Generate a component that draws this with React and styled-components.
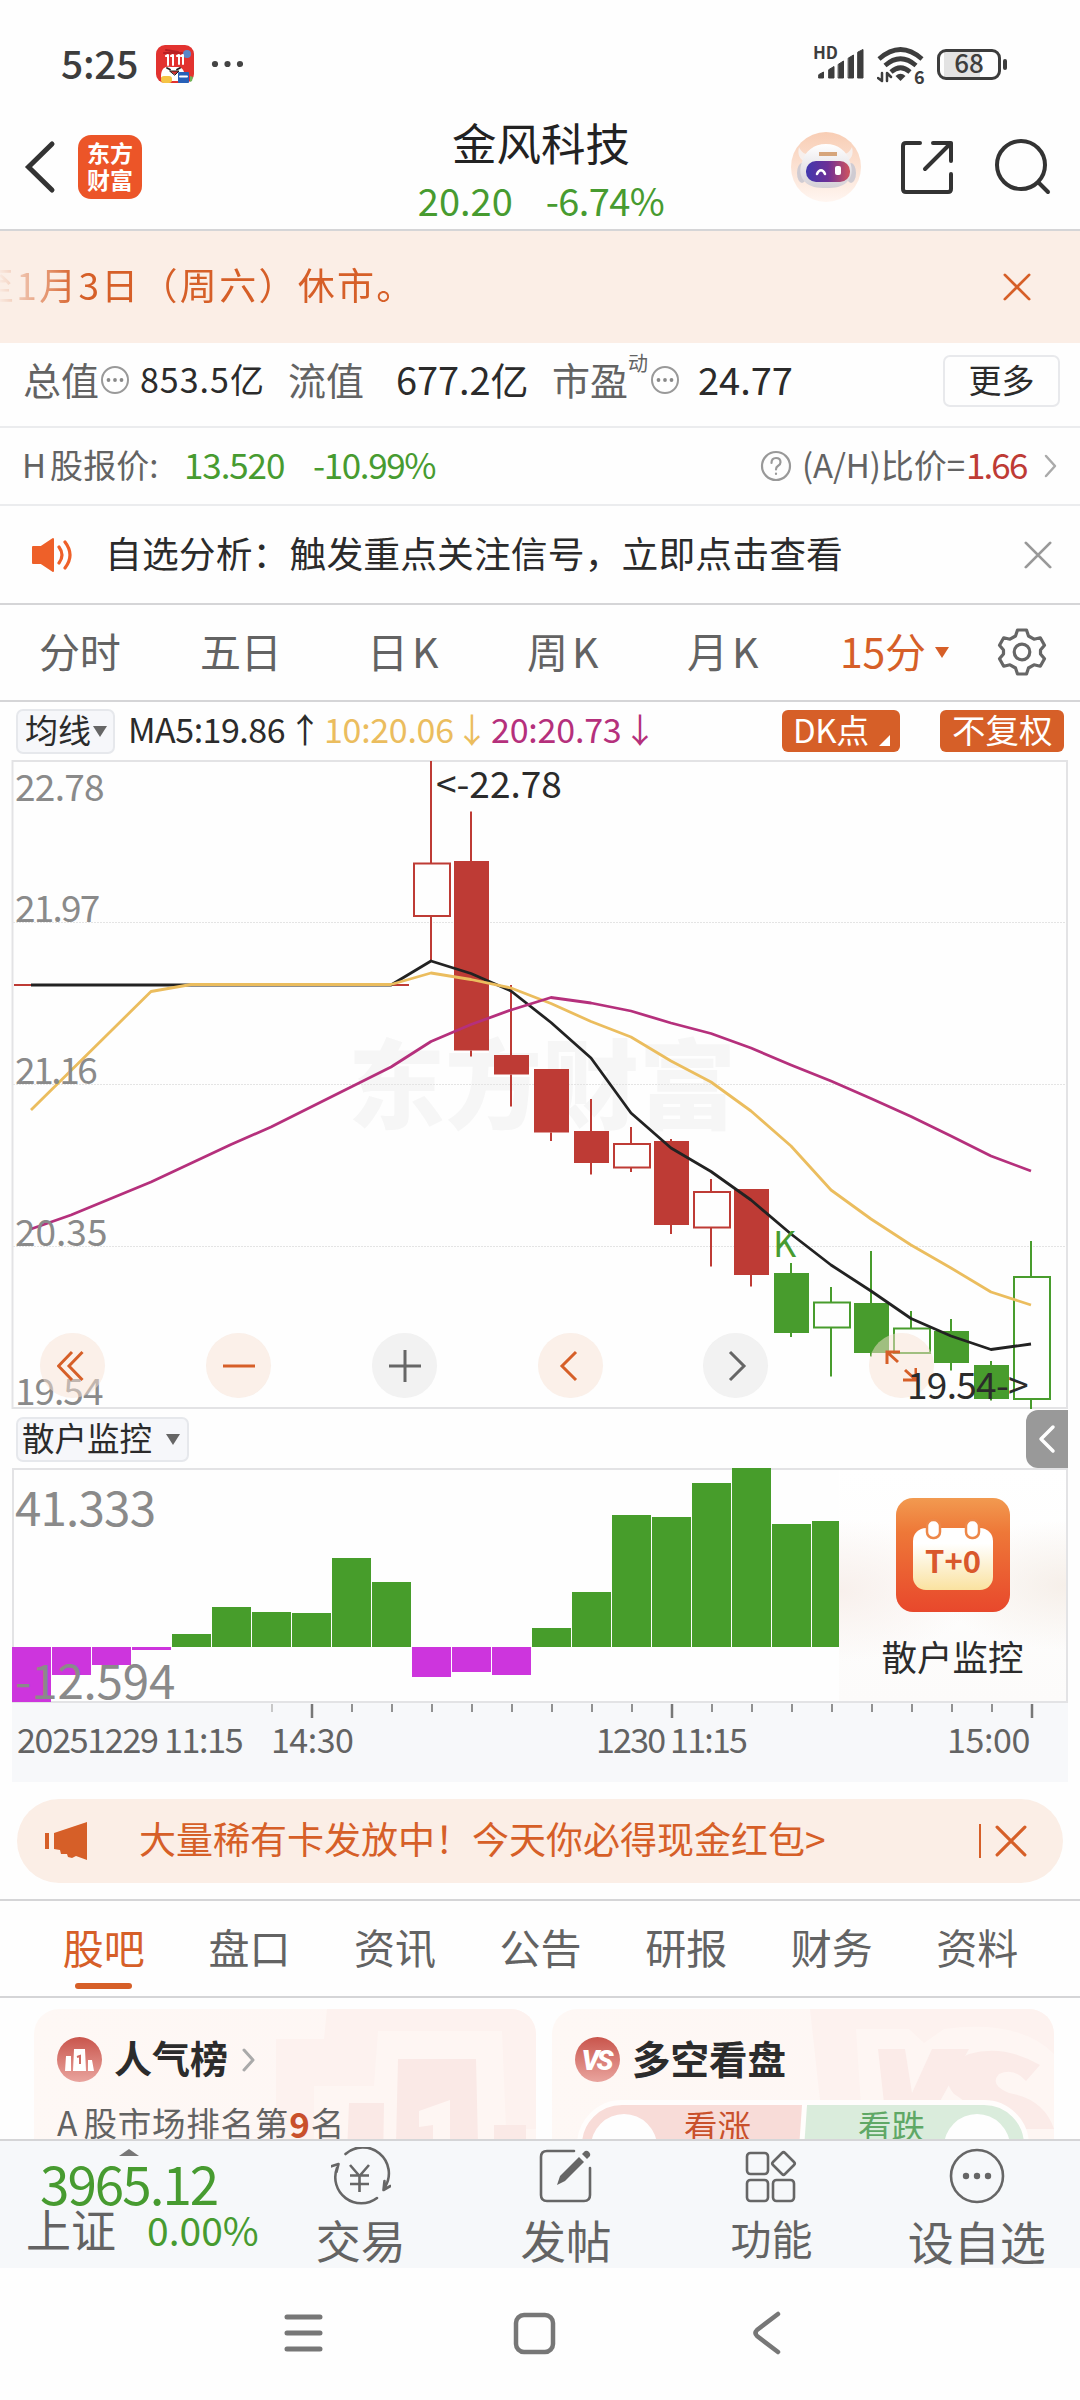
import React from "react";
import styled, { createGlobalStyle } from "styled-components";

const C = {
  orange: "#d65f28",
  green: "#479b30",
  red: "#be3b35",
  ink: "#2b2b2b",
  gray: "#636363",
  axis: "#8a8a8a",
  line: "#d5d5d7",
  frame: "#e3e3e5",
  peach: "#fbeee6",
  bar: "#f7f8fa",
};

const Global = createGlobalStyle`
  html, body { margin: 0; padding: 0; background: #fff; }
  * { box-sizing: border-box; }
  svg { display: block; flex: none; }
`;

const Screen = styled.div`
  width: 1080px;
  height: 2400px;
  overflow: hidden;
  display: flex;
  flex-direction: column;
  background: #fefefe;
  font-family: "Noto Sans CJK SC", "Noto Sans", sans-serif;
  color: ${C.ink};
`;

const Row = styled.div`
  display: flex;
  flex: none;
  align-items: center;
  height: ${(p) => p.$h}px;
  padding-left: ${(p) => p.$pl || 0}px;
  border-bottom: ${(p) => (p.$line ? `2px solid ${p.$line}` : "none")};
`;

const Label = styled.span`
  flex: none;
  display: block;
  white-space: nowrap;
  line-height: 1;
  padding-bottom: 0.12em;
  font-size: ${(p) => p.$s}px;
  font-weight: ${(p) => p.$b || 400};
  color: ${(p) => p.$c || C.ink};
  letter-spacing: ${(p) => p.$ls || 0}px;
  width: ${(p) => (p.$w ? `${p.$w}px` : "auto")};
  margin-left: ${(p) => p.$ml || 0}px;
  margin-top: ${(p) => p.$mt || 0}px;
`;

/* first glyph of a mixed Latin/Chinese label, with extra room after it */
const Lead = styled.span`
  letter-spacing: ${(p) => p.$g}px;
`;

const Icon = styled.svg`
  margin-left: ${(p) => p.$ml || 0}px;
  margin-top: ${(p) => p.$mt || 0}px;
  fill: none;
  stroke-linecap: round;
  stroke-linejoin: round;
`;

/* ---------- status bar ---------- */
const StatusBar = styled.header`
  display: flex;
  flex: none;
  align-items: center;
  height: 105px;
  padding: 23px 0 0 61px;
`;

const AppBadge = () => (
  <Icon width="38" height="38" viewBox="0 0 38 38" $ml={13}>
    <rect width="38" height="38" rx="9" fill="#e2322f" />
    <circle cx="31" cy="9" r="4" fill="#5b86c8" />
    <path d="M8 8h18M10 5l12 2" stroke="#b81f22" strokeWidth="2" />
    <path d="M10 11l2-1v10M15 11l2-1v10M21 11l2-1v9M25 11l2-1v9" stroke="#fff" strokeWidth="2" />
    <path d="M5 32c0-13 8-10 13-10s10-1 11 10l-3 4H8z" fill="#fff" />
    <path d="M11 23l3 1.500M24 23l-3 1.500" stroke="#222" strokeWidth="1.800" />
    <path d="M14 26h9l-4 4z" fill="#d2322f" stroke="#222" strokeWidth="1" />
    <rect x="5" y="31" width="11" height="7" rx="3" fill="#f5c444" />
    <rect x="22" y="27" width="11" height="11" rx="1" fill="#2861b8" />
    <path d="M24 31.500h7" stroke="#fff" strokeWidth="2" />
    <path d="M34 31l3 1-1 4-2 1z" fill="#72b356" />
  </Icon>
);

const MoreDots = () => (
  <Icon width="32" height="10" viewBox="0 0 32 10" $ml={17}>
    <circle cx="4" cy="5" r="3.1" fill="#444" />
    <circle cx="16.5" cy="5" r="3.1" fill="#444" />
    <circle cx="29" cy="5" r="3.1" fill="#444" />
  </Icon>
);

const SignalGroup = styled.div`
  display: flex;
  align-items: flex-start;
  width: 52px;
  height: 34px;
  margin-left: 571px;
`;
const HdMark = styled.span`
  font: 700 17px/15px "Noto Sans CJK SC", sans-serif;
  color: #3d3d3d;
  width: 0;
  margin: -3px 0 0 -1px;
  white-space: nowrap;
`;

const Signal = () => (
  <SignalGroup>
    <HdMark>HD</HdMark>
    <Icon width="52" height="34" viewBox="0 0 52 34">
      <path d="M6 31h4.5v-6l-4.5 2.5zM16 31h5v-11.500l-5 3zM25.500 31h5V14l-5 3.200zM35.500 31h5V8l-5 3zM45 31h5V2.500l-5 2.500z" fill="#3d3d3d" stroke="#3d3d3d" strokeWidth="1" />
    </Icon>
  </SignalGroup>
);

const WifiWrap = styled.div`
  display: flex;
  align-items: flex-end;
  height: 38px;
  width: 47px;
  margin-left: 11px;
`;
const WifiSix = styled.span`
  font: 700 18px/14px "Noto Sans CJK SC", sans-serif;
  color: #3d3d3d;
  width: 10px;
  margin-left: -10px;
`;
const Wifi = () => (
  <WifiWrap>
    <Icon width="47" height="38" viewBox="0 0 47 38">
      <g stroke="#3d3d3d" strokeWidth="4.600" strokeLinecap="butt">
        <path d="M2 14Q23.500-5 45 14" />
        <path d="M8 20.500Q23.500 7 39 20.500" />
        <path d="M14 27Q23.500 18.500 33 27" />
      </g>
      <path d="M18.500 31Q23.500 26.500 28.500 31L23.500 36z" fill="#3d3d3d" />
      <path d="M1 33l4 3V28M10 36v-8l4 4" stroke="#3d3d3d" strokeWidth="2.500" />
    </Icon>
    <WifiSix>6</WifiSix>
  </WifiWrap>
);

const Battery = styled.div`
  width: 64px;
  height: 31px;
  margin-left: 13px;
  border: 3px solid #3d3d3d;
  border-radius: 9px;
  display: flex;
  align-items: center;
  justify-content: center;
  background: linear-gradient(90deg, #fefefe 4px, #e3e3e3 4px, #e3e3e3 40px, #fefefe 40px);
`;
const BatteryTip = styled.i`
  width: 4px;
  height: 11px;
  border-radius: 2px;
  margin-left: 2px;
  background: #3d3d3d;
`;

/* ---------- title bar ---------- */
const TitleBar = styled.div`
  display: flex;
  flex: none;
  height: 126px;
  padding-left: 24px;
  align-items: center;
  border-bottom: 2px solid ${C.line};
`;
const Brand = styled.div`
  width: 64px;
  height: 64px;
  margin: 0 0 0 22px;
  border-radius: 13px;
  background: #ec5528;
  color: #fff;
  display: grid;
  place-content: center;
  text-align: center;
  font-size: 23px;
  line-height: 27px;
  font-weight: 700;
  padding-bottom: 3px;
`;
const TitleStack = styled.div`
  display: flex;
  flex-direction: column;
  align-items: center;
  width: 260px;
  margin-left: 269px;
  height: 124px;
  padding-top: 15px;
`;
const Quote = styled.div`
  display: flex;
  gap: 33px;
  margin-top: 11px;
`;

const Robot = () => (
  <Icon width="72" height="72" viewBox="0 0 72 72" $ml={119}>
    <defs>
      <linearGradient id="rb" x1="0" y1="0" x2="0" y2="1">
        <stop offset="0" stopColor="#f8cdb4" />
        <stop offset="1" stopColor="#fff6f1" />
      </linearGradient>
      <linearGradient id="vis" x1="0" y1="0" x2="1" y2="0">
        <stop offset="0" stopColor="#4038ae" />
        <stop offset=".5" stopColor="#6d2f96" />
        <stop offset="1" stopColor="#d0545e" />
      </linearGradient>
      <linearGradient id="hd" x1="0" y1="0" x2="0" y2="1">
        <stop offset="0" stopColor="#ffffff" />
        <stop offset="1" stopColor="#d4d0d6" />
      </linearGradient>
    </defs>
    <circle cx="36" cy="36" r="35" fill="url(#rb)" />
    <path d="M9 16c-2 8 1 13 7 15l6-7c-7 0-11-3-13-8zM62 16c2 8-1 13-7 15l-6-7c7 0 11-3 13-8z" fill="#f7efec" />
    <ellipse cx="12" cy="42" rx="5" ry="10" fill="#cfcbd2" />
    <ellipse cx="61" cy="42" rx="5" ry="10" fill="#cfcbd2" />
    <path d="M36 13c12 0 21 7 24 18 3 8 2 15-3 20-5 5-12 6-21 6s-16-1-21-6c-5-5-6-12-3-20 3-11 12-18 24-18z" fill="url(#hd)" />
    <path d="M29 23h18" stroke="#d6a57b" strokeWidth="4" strokeLinecap="butt" />
    <rect x="16" y="30" width="44" height="21" rx="10" fill="url(#vis)" />
    <path d="M27 43c2-5 6-5 8 0" stroke="#fff" strokeWidth="2.500" />
    <rect x="45" y="35" width="6" height="9" rx="2" fill="#fff" />
  </Icon>
);

/* ---------- banners ---------- */
const Notice = styled.div`
  display: flex;
  flex: none;
  align-items: center;
  height: 112px;
  background: ${C.peach};
`;
const NoticeText = styled.div`
  display: flex;
  width: 1003px;
  overflow: hidden;
  margin-left: -23px;
  -webkit-mask-image: linear-gradient(90deg, transparent 20px, #000 100px);
  mask-image: linear-gradient(90deg, transparent 20px, #000 100px);
`;
const Cross = ({ size, color, ml, sw = 3 }) => (
  <Icon width={size} height={size} viewBox="0 0 30 30" stroke={color} strokeWidth={sw} $ml={ml}>
    <path d="M2 2L28 28M28 2L2 28" />
  </Icon>
);
const Info = ({ ml }) => (
  <Icon width="30" height="30" viewBox="0 0 30 30" stroke="#999" strokeWidth="2" $ml={ml} $mt={-10}>
    <circle cx="15" cy="15" r="13" />
    <g fill="#888" stroke="none">
      <circle cx="8.500" cy="15" r="1.900" />
      <circle cx="15" cy="15" r="1.900" />
      <circle cx="21.500" cy="15" r="1.900" />
    </g>
  </Icon>
);
const MoreButton = styled.button`
  width: 117px;
  height: 52px;
  margin: -7px 0 0 149px;
  padding: 0 0 4px;
  border: 2px solid #e8e9ec;
  border-radius: 7px;
  background: #fefefe;
  font: 400 33px/1 "Noto Sans CJK SC", sans-serif;
  color: ${C.ink};
`;

/* ---------- chart period tabs ---------- */
const Period = styled(Label).attrs({ $s: 41, $ls: -0.3 })``;
const Caret = styled.i`
  width: 0;
  height: 0;
  border: 7px solid transparent;
  border-top: 11px solid ${(p) => p.$c};
  border-bottom: 0;
  margin-left: ${(p) => p.$ml}px;
`;
const Gear = () => (
  <Icon width="50" height="50" viewBox="0 0 50 50" stroke="#666" strokeWidth="3.200" $ml={48} $mt={-2}>
    <path d="M20.500 3h9l2 6 5.500 3.200 6.300-1.400 4.200 7.400-4 4.800v4l4 4.800-4.200 7.400-6.300-1.400-5.500 3.200-2 6h-9l-2-6-5.500-3.200-6.300 1.400-4.200-7.400 4-4.800v-4l-4-4.800 4.200-7.400 6.300 1.400 5.500-3.200z" />
    <circle cx="25" cy="25" r="7.800" />
  </Icon>
);

const Pick = styled.div`
  display: flex;
  align-items: center;
  width: ${(p) => p.$w}px;
  height: 45px;
  padding-left: ${(p) => p.$pl}px;
  border: 2px solid #e6e8ec;
  border-radius: 7px;
  background: #f6f7fa;
`;
const Flag = styled.div`
  display: flex;
  align-items: center;
  width: ${(p) => p.$w}px;
  height: 42px;
  margin-left: ${(p) => p.$ml}px;
  padding-left: ${(p) => p.$pl}px;
  border-radius: 6px;
  background: ${C.orange};
`;
const Corner = styled.i`
  align-self: flex-end;
  margin: 0 0 6px 10px;
  border-left: 11px solid transparent;
  border-bottom: 11px solid #fff;
`;

/* ---------- candle chart ---------- */
const ChartBox = styled.section`
  position: relative;
  flex: none;
  height: 649px;
  width: 1080px;
`;
const Overlay = styled(Label)`
  position: absolute;
  left: ${(p) => p.$x}px;
  top: ${(p) => p.$y}px;
`;
const Watermark = styled.div`
  position: absolute;
  left: 348px;
  top: 270px;
  font-size: 97px;
  line-height: 1;
  font-weight: 900;
  color: #f6f6f6;
`;
const Plot = styled.svg`
  position: absolute;
  left: 0;
  top: 0;
  fill: none;
`;
const RoundTool = styled.div`
  position: absolute;
  left: ${(p) => p.$x - 32.5}px;
  top: 573px;
  width: 65px;
  height: 65px;
  border-radius: 50%;
  display: grid;
  place-items: center;
  background: ${(p) => (p.$warm ? "rgba(247,225,211,.5)" : "rgba(229,229,229,.5)")};
`;

const candles = [
  [863.5, 916, 761, 961, "r", 1], [861, 1050.5, 811.5, 1056.5, "r", 0], [1055, 1074.5, 985, 1106.5, "r", 0],
  [1069, 1132.5, 1069, 1141, "r", 0], [1131, 1163, 1099, 1174.5, "r", 0], [1144, 1167.5, 1127, 1172, "r", 1],
  [1141, 1225, 1139, 1234, "r", 0], [1192, 1227.5, 1179, 1266.5, "r", 1], [1189, 1275, 1189, 1286.5, "r", 0],
  [1273, 1333, 1263, 1337, "g", 0], [1302.5, 1327.5, 1287, 1376.5, "g", 1], [1303, 1353, 1251, 1356.5, "g", 0],
  [1328.5, 1353, 1311, 1353, "g", 1], [1331, 1363, 1319, 1370.5, "g", 0], [1365, 1399, 1361, 1400.5, "g", 0],
  [1277, 1399, 1241, 1409, "g", 1],
];
const ma5 = "31,985 391,985 431,961 471,973.5 511,991 551,1022.500 591,1058 631,1113 671,1148 711,1171.500 751,1200 791,1234 831,1265 871,1291 911,1318.500 951,1336 991,1349.500 1031,1344";
const ma10 = "31,1110 151,991.500 191,984.500 391,984.500 431,973 471,979.500 511,988 551,1003.500 591,1021.500 631,1037 671,1061 711,1082 751,1111 791,1146 831,1190 871,1219 911,1245 951,1268 991,1292 1031,1305";
const ma20 = "31,1229 71,1215 151,1182 231,1144.500 271,1127 391,1067 431,1041.500 471,1024.500 511,1010 551,997.500 591,1003 631,1011 671,1023 711,1033.500 751,1048 791,1065 831,1081 871,1098.500 911,1116.500 951,1136 991,1156 1031,1171";

const CandlePlot = () => (
  <Plot width="1080" height="649" viewBox="0 760 1080 649">
    <path d="M12.500 761V1408H1067V761z" stroke={C.frame} strokeWidth="2" />
    {[922.5, 1084.5, 1246.5].map((y) => (
      <path key={y} d={`M13 ${y}H1067`} stroke="#e4e4e4" strokeWidth="1" strokeDasharray="2 1" />
    ))}
    <path d="M14 985H409" stroke={C.red} strokeWidth="2" />
    {candles.map(([t, b, hi, lo, tone, hollow], i) => {
      const x = 431 + i * 40;
      const col = tone === "r" ? C.red : "#489c2d";
      return (
        <g key={x} stroke={col} strokeWidth="2">
          <path d={`M${x} ${hi}V${t}M${x} ${b}V${lo}`} />
          {hollow ? (
            <rect x={x - 17} y={t} width="36" height={b - t} />
          ) : (
            <rect x={x - 17} y={t} width="35" height={b - t} fill={col} stroke="none" />
          )}
        </g>
      );
    })}
    <g strokeWidth="2.800" strokeLinejoin="round">
      <polyline points={ma5} stroke="#222" />
      <polyline points={ma10} stroke="#ebbd5e" />
      <polyline points={ma20} stroke="#b5307c" />
    </g>
  </Plot>
);

const ToolGlyph = ({ d, color }) => (
  <svg width="32" height="32" viewBox="0 0 32 32" fill="none" stroke={color} strokeWidth="3">
    <path d={d} />
  </svg>
);
const tools = [
  [72.5, 1, "M15 2L1.500 16L15 30M25.500 2L12 16L25.500 30"],
  [238.5, 1, "M0 16H32"],
  [404.5, 0, "M0 16H32M16 0V32"],
  [570, 1, "M22 2L8 16L22 30"],
  [735.5, 0, "M10 2L24 16L10 30"],
  [901, 1, "M2 14V2H15M2 2L13 12M31 18V30H18M31 30L20 20"],
];

/* ---------- monitor sub-chart ---------- */
const MonitorHead = styled.div`
  display: flex;
  flex: none;
  align-items: center;
  height: 59px;
  padding: 1px 0 0 16px;
`;
const Collapse = styled.div`
  width: 42px;
  height: 58px;
  margin-left: 837px;
  border-radius: 12px 0 0 12px;
  background: #999;
  display: grid;
  place-items: center;
`;
const MonitorBox = styled.section`
  position: relative;
  flex: none;
  display: flex;
  justify-content: flex-end;
  width: 1056px;
  height: 235px;
  margin-left: 12px;
  border: 2px solid ${C.frame};
`;
const bars = [1702, 1675, 1665, 1650, 1634, 1607, 1612, 1613, 1558, 1582, 1677, 1672, 1675, 1628, 1592, 1515, 1517, 1483, 1468, 1524, 1521];
const BarPlot = styled.svg`
  position: absolute;
  left: -2px;
  top: -2px;
`;
const Promo = styled.div`
  display: flex;
  flex-direction: column;
  align-items: center;
  width: 227px;
  height: 231px;
  padding-top: 28px;
  background: radial-gradient(ellipse at 0 52%, #f8f0ec 0, transparent 42%), radial-gradient(ellipse at 100% 50%, #f6efe9 0, transparent 40%), linear-gradient(#fff, #fcfbfa);
`;
const CalendarIcon = () => (
  <svg width="114" height="114" viewBox="0 0 114 114">
    <defs>
      <linearGradient id="cal" x1="0" y1="0" x2="0" y2="1">
        <stop offset="0" stopColor="#f29a50" />
        <stop offset=".3" stopColor="#ee7838" />
        <stop offset="1" stopColor="#e8482c" />
      </linearGradient>
      <linearGradient id="pg" x1="0" y1="0" x2="0" y2="1">
        <stop offset=".25" stopColor="#fff" />
        <stop offset="1" stopColor="#fae2a0" />
      </linearGradient>
    </defs>
    <rect width="114" height="114" rx="17" fill="url(#cal)" />
    <rect x="17" y="30" width="80" height="62" rx="13" fill="url(#pg)" />
    <rect x="31" y="22" width="13" height="18" rx="6" fill="#fff" stroke="#ed8748" strokeWidth="2.500" />
    <rect x="70" y="22" width="13" height="18" rx="6" fill="#fff" stroke="#ed8748" strokeWidth="2.500" />
    <text x="57" y="75" fontFamily="'Noto Sans CJK SC', sans-serif" fontWeight="700" fontSize="31" letterSpacing="0" textAnchor="middle" fill="#d9582c">T+0</text>
  </svg>
);
const AxisBox = styled.div`
  flex: none;
  width: 1056px;
  height: 79px;
  margin-left: 12px;
  background: ${C.bar};
`;
const AxisLabels = styled.div`
  display: flex;
  padding: 3px 0 0 5px;
`;

/* ---------- promo pill and content tabs ---------- */
const Pill = styled.div`
  display: flex;
  flex: none;
  align-items: center;
  width: 1046px;
  height: 84px;
  margin: 17px 0 16px 17px;
  border-radius: 42px;
  background: ${C.peach};
`;
const Rule = styled.i`
  width: 1.5px;
  height: 34px;
  margin-left: 14px;
  background: ${C.orange};
`;
const Tabs = styled.nav`
  display: flex;
  flex: none;
  height: 99px;
  padding-left: 31px;
  border-top: 2px solid ${C.line};
  border-bottom: 2px solid ${C.line};
`;
const Tab = styled.div`
  display: flex;
  flex-direction: column;
  align-items: center;
  width: 145.6px;
  padding-top: 25px;
  &::after {
    content: "";
    width: 57px;
    height: 6px;
    margin-top: 11px;
    border-radius: 3px;
    background: ${(p) => (p.$on ? C.orange : "transparent")};
  }
`;

/* ---------- cards ---------- */
const Cards = styled.div`
  display: flex;
  flex: none;
  gap: 16px;
  height: 141px;
  padding: 11px 0 0 34px;
  overflow: hidden;
`;
const Card = styled.article`
  position: relative;
  width: 502px;
  height: 220px;
  border-radius: 25px;
  overflow: hidden;
  background: linear-gradient(100deg, #fef8f5, #fef6f4);
`;
const CardArt = styled.svg`
  position: absolute;
  right: 0;
  top: 0;
`;
const CardHead = styled.div`
  position: relative;
  display: flex;
  align-items: center;
  padding: 28px 0 0 23px;
`;
const CardText = styled.div`
  position: relative;
  display: flex;
  padding: 23px 0 0 23px;
`;
const Vote = styled.div`
  position: relative;
  display: flex;
  width: 452px;
  height: 90px;
  margin: 18px 0 0 25px;
  border: 5px solid #fffdfc;
  border-radius: 46px;
  overflow: hidden;
  background: linear-gradient(94deg, #f8dcd8 219px, #fffdfc 220px, #fffdfc 224px, #daecdc 225px);
`;
const Knob = styled.i`
  flex: none;
  width: 66px;
  height: 66px;
  border-radius: 50%;
  margin: 9px 0 0 ${(p) => p.$ml}px;
  background: #fefefe;
`;

/* ---------- bottom bars ---------- */
const BottomBar = styled.footer`
  display: flex;
  flex: none;
  width: 1080px;
  height: 129px;
  border-top: 2px solid ${C.line};
  background: #f6f8fa;
`;
const IndexCell = styled.div`
  width: 258px;
  padding: 8px 0 0 26px;
`;
const UpMark = styled.i`
  display: block;
  width: 0;
  margin-left: 93px;
  border: 10px solid transparent;
  border-bottom: 7px solid #777;
  border-top: 0;
`;
const IndexRow = styled.div`
  display: flex;
  align-items: center;
`;
const Action = styled.div`
  display: flex;
  flex-direction: column;
  align-items: center;
  width: 205.4px;
  padding-top: 6px;
`;
const SysNav = styled.div`
  display: flex;
  flex: none;
  align-items: center;
  height: 130px;
  padding-left: 283px;
`;

const actionIcons = [
  <g key="t">
    <path d="M14.500 7A26 26 0 0 1 54 40M46 51A26 26 0 0 1 6 21M-0.500 19.500L7.500 17L5.500 25M59.500 39l-7 4 1-9" strokeWidth="2.600" />
    <path d="M19 18L28.500 29L38 18M19 28.500h19M19 37h19M28.500 28V45" strokeWidth="2.600" strokeLinecap="butt" />
  </g>,
  <g key="p">
    <path d="M38 4H11q-6 0-6 6v38q0 6 6 6h37q6 0 6-6V21" />
    <path d="M21 38l3-9L43 10l5 5L29 34z" fill="#666" stroke="none" />
    <path d="M46 7l3-3q2-1 4 1t1 4l-3 3z" fill="#666" stroke="none" />
  </g>,
  <g key="f">
    <rect x="6" y="6" width="21" height="21" rx="3.500" />
    <rect x="6" y="33" width="21" height="21" rx="3.500" />
    <rect x="32" y="33" width="21" height="21" rx="3.500" />
    <path d="M41 6q1.500-1.500 3 0l9 9q1.500 1.500 0 3l-9 9q-1.500 1.500-3 0l-9-9q-1.500-1.500 0-3z" />
  </g>,
  <g key="s">
    <circle cx="30" cy="29" r="26" />
    <g fill="#666" stroke="none">
      <circle cx="19" cy="29" r="3.200" />
      <circle cx="30" cy="29" r="3.200" />
      <circle cx="41" cy="29" r="3.200" />
    </g>
  </g>,
];
const actions = [["交易", 45], ["发帖", 45.5], ["功能", 41], ["设自选", 46]];

export default function App() {
  return (
    <Screen>
      <Global />
      <StatusBar>
        <Label $s={39} $b={500} $c="#3d3d3d" $w={82} $ls={-0.3} $mt={1}>5:25</Label>
        <AppBadge />
        <MoreDots />
        <Signal />
        <Wifi />
        <Battery><Label $s={26} $b={500} $c="#3d3d3d">68</Label></Battery>
        <BatteryTip />
      </StatusBar>

      <TitleBar>
        <Icon width="32" height="54" viewBox="0 0 32 54" stroke="#333" strokeWidth="5">
          <path d="M28 4L4.500 27L28 50" strokeLinejoin="miter" />
        </Icon>
        <Brand><span>东方</span><span>财富</span></Brand>
        <TitleStack>
          <Label $s={44.5} $c="#222">金风科技</Label>
          <Quote>
            <Label $s={38} $c={C.green}>20.20</Label>
            <Label $s={38} $c={C.green} $ls={-0.6}>-6.74%</Label>
          </Quote>
        </TitleStack>
        <Robot />
        <Icon width="58" height="58" viewBox="0 0 58 58" stroke="#333" strokeWidth="4" $ml={36}>
          <path d="M22 5H8q-3 0-3 3v43q0 3 3 3h42q3 0 3-3V36M35 5h18v18M53 5L27 31" />
        </Icon>
        <Icon width="58" height="58" viewBox="0 0 58 58" stroke="#333" strokeWidth="4" $ml={38}>
          <circle cx="27" cy="27" r="24" />
          <path d="M45 45L54 54" />
        </Icon>
      </TitleBar>

      <Notice>
        <NoticeText><Label $s={37} $c={C.orange} $ls={2.3}>至1月3日（周六）休市。</Label></NoticeText>
        <Cross size={28} color={C.orange} ml={23} />
      </Notice>

      <Row $h={85} $pl={23} $line="#ebecee">
        <Label $s={38} $c={C.gray} $w={77} $mt={-7}>总值</Label>
        <Info ml={0} />
        <Label $s={34} $w={134} $ml={10} $ls={1} $mt={-7}>853.5亿</Label>
        <Label $s={38} $c={C.gray} $ml={14} $w={94} $mt={-7}>流值</Label>
        <Label $s={38} $ml={14} $ls={-0.1} $w={140} $mt={-7}>677.2亿</Label>
        <Label $s={38} $c={C.gray} $ml={16} $mt={-7}>市盈</Label>
        <Label $s={20} $c={C.gray} $mt={-40}>动</Label>
        <Info ml={2} />
        <Label $s={38} $ml={18} $w={96} $mt={-7}>24.77</Label>
        <MoreButton>更多</MoreButton>
      </Row>

      <Row $h={78} $pl={22} $line="#ebecee">
        <Label $s={33} $c={C.gray} $w={162} $ls={0.1}><Lead $g={4}>H</Lead>股报价:</Label>
        <Label $s={35} $c={C.green} $ls={-1.1} $w={129}>13.520</Label>
        <Label $s={35} $c={C.green} $ls={-1.4} $w={447}>-10.99%</Label>
        <Icon width="32" height="32" viewBox="0 0 32 32" stroke="#999" strokeWidth="2.200">
          <circle cx="16" cy="16" r="14" />
          <path d="M11.500 13q0-5 4.500-5t4.500 4.200q0 2.300-2.600 3.800-1.900 1.200-1.900 3.500M16 23.500v.5" />
        </Icon>
        <Label $s={33} $c={C.gray} $ml={10} $w={164} $ls={-0.1}>(A/H)比价=</Label>
        <Label $s={35} $c={C.red} $ls={-1.9} $w={77}>1.66</Label>
        <Icon width="14" height="24" viewBox="0 0 14 24" stroke="#aaa" strokeWidth="2.500"><path d="M3 2L12 12L3 22" /></Icon>
      </Row>

      <Row $h={99} $pl={31} $line={C.line}>
        <Icon width="44" height="38" viewBox="0 0 44 38">
          <path d="M2 11h8L22 3v32L10 27H2z" fill="#ee6029" stroke="#ee6029" strokeWidth="2" />
          <path d="M28 11q6 8 0 16M34 6q10 13 0 26" stroke="#ee6029" strokeWidth="3.200" />
        </Icon>
        <Label $s={36.8} $ml={30} $w={918} $ls={0.1}>自选分析：触发重点关注信号，立即点击查看</Label>
        <Cross size={28} color="#999" ml={1} />
      </Row>

      <Row $h={97} $pl={39} $line={C.line}>
        <Period $c={C.gray} $w={161}>分时</Period>
        <Period $c={C.gray} $w={167}>五日</Period>
        <Period $c={C.gray} $w={160}><Lead $g={4}>日</Lead>K</Period>
        <Period $c={C.gray} $w={160}><Lead $g={4}>周</Lead>K</Period>
        <Period $c={C.gray} $w={153}><Lead $g={4}>月</Lead>K</Period>
        <Period $c={C.orange} $w={86}>15分</Period>
        <Caret $c={C.orange} $ml={9} />
        <Gear />
      </Row>

      <Row $h={58} $pl={16}>
        <Pick $w={99} $pl={7}>
          <Label $s={33}>均线</Label>
          <Caret $c="#666" $ml={2} />
        </Pick>
        <Label $s={34} $ml={13} $w={160} $ls={-0.5}>MA5:19.86</Label>
        <Label $s={34} $w={36}>↑</Label>
        <Label $s={34} $c="#ebbd5e" $w={131} $ls={-0.3}>10:20.06</Label>
        <Label $s={34} $c="#ebbd5e" $w={36}>↓</Label>
        <Label $s={34} $c="#b5307c" $w={132} $ls={-0.2}>20:20.73</Label>
        <Label $s={34} $c="#b5307c" $w={36}>↓</Label>
        <Flag $w={118} $ml={123} $pl={11}><Label $s={33} $c="#fff" $ls={-0.4}>DK点</Label><Corner /></Flag>
        <Flag $w={124} $ml={40} $pl={12}><Label $s={33.5} $c="#fff">不复权</Label></Flag>
      </Row>

      <ChartBox>
        <Watermark>东方财富</Watermark>
        <CandlePlot />
        {[["22.78", 787.5, -0.7], ["21.97", 909, -1.8], ["21.16", 1071, -2.4], ["20.35", 1233, 0], ["19.54", 1392, -1]].map(([t, y, ls]) => (
          <Overlay key={t} $s={37} $c={C.axis} $ls={ls} $x={15} $y={y - 760 - 21}>{t}</Overlay>
        ))}
        <Overlay $s={37} $x={436} $y={4}>&lt;-22.78</Overlay>
        <Overlay $s={36} $c={C.green} $x={773} $y={463}>K</Overlay>
        {tools.map(([x, warm, d]) => (
          <RoundTool key={x} $x={x} $warm={warm}><ToolGlyph d={d} color={warm ? C.orange : "#666"} /></RoundTool>
        ))}
        <Overlay $s={37} $x={907} $y={605} $ls={-0.7}>19.54-&gt;</Overlay>
      </ChartBox>

      <MonitorHead>
        <Pick $w={173} $pl={4}>
          <Label $s={32.5}>散户监控</Label>
          <Caret $c="#666" $ml={14} />
        </Pick>
        <Collapse><Icon width="20" height="30" viewBox="0 0 20 30" stroke="#fff" strokeWidth="3.500"><path d="M16 3L4 15L16 27" /></Icon></Collapse>
      </MonitorHead>

      <MonitorBox>
        <BarPlot width="840" height="235" viewBox="0 1468 840 235">
          {bars.map((y, i) => {
            const w = i === 20 ? 27 : 39;
            return y > 1647 ? (
              <rect key={i} x={i * 40} y={1647} width={w} height={y - 1647} fill="#cd35dd" />
            ) : (
              <rect key={i} x={i * 40} y={y} width={w} height={1647 - y} fill="#479d2b" />
            );
          })}
        </BarPlot>
        <Overlay $s={47.5} $c={C.axis} $x={1} $y={12} $ls={-0.8}>41.333</Overlay>
        <Overlay $s={47.5} $c={C.axis} $x={1} $y={184.5} $ls={-0.2}>-12.594</Overlay>
        <Promo>
          <CalendarIcon />
          <Label $s={35.5} $mt={26}>散户监控</Label>
        </Promo>
      </MonitorBox>

      <AxisBox>
        <svg width="1056" height="16" viewBox="12 1703 1056 16">
          {Array.from({ length: 20 }, (_, i) => 272 + i * 40).map((x, i) => (
            <path key={x} d={`M${x} 1704V${i % 9 === 1 ? 1718 : 1712}`} stroke={i ? "#777" : "#bbb"} strokeWidth={i % 9 === 1 ? 2.5 : 1.6} />
          ))}
        </svg>
        <AxisLabels>
          <Label $s={34} $c={C.gray} $ls={-1.3} $w={254}>20251229 11:15</Label>
          <Label $s={34} $c={C.gray} $ls={-0.5} $w={325}>14:30</Label>
          <Label $s={34} $c={C.gray} $ls={-1.8} $w={351}>1230 11:15</Label>
          <Label $s={34} $c={C.gray} $ls={-0.4}>15:00</Label>
        </AxisLabels>
      </AxisBox>

      <Pill>
        <Icon width="44" height="40" viewBox="0 0 44 40" $ml={28}>
          <path d="M0 12h4v16H0zM9 12L42 1v38L31 35l-4 2-4-1-1-3-6 0-1-4-6-1z" fill={C.orange} />
        </Icon>
        <Label $s={37} $c={C.orange} $ml={50} $w={826}>大量稀有卡发放中！今天你必得现金红包&gt;</Label>
        <Rule />
        <Cross size={32} color={C.orange} ml={14} />
      </Pill>

      <Tabs>
        {["股吧", "盘口", "资讯", "公告", "研报", "财务", "资料"].map((t, i) => (
          <Tab key={t} $on={i === 0}><Label $s={41} $c={i ? C.gray : C.orange}>{t}</Label></Tab>
        ))}
      </Tabs>

      <Cards>
        <Card>
          <CardArt width="260" height="220" viewBox="0 0 260 220">
            <path d="M51 0H260V220H0V30H48z" fill="#fdf2ef" />
            <path d="M102 22H226L230 120H260V220H38V77H98z" fill="#fef6f3" />
            <path d="M122 50H200L204 220H118z" fill="#fae9e6" />
            <path d="M73 94H108L106 220H68zM218 116H250V220H218z" fill="#fae9e6" />
            <path d="M143 102L174 91V220H157V116L143 118z" fill="#fef6f3" />
          </CardArt>
          <CardHead>
            <svg width="45" height="45" viewBox="0 0 45 45">
              <defs>
                <linearGradient id="cg" x1="0" y1="0" x2="0" y2="1">
                  <stop offset="0" stopColor="#c9554c" />
                  <stop offset="1" stopColor="#e9a49e" />
                </linearGradient>
              </defs>
              <circle cx="22.500" cy="22.500" r="22.500" fill="url(#cg)" />
              <path d="M9 19h5v15H8zM17 12h11l1 22H16zM31 23h4l2 11h-6z" fill="#fff" />
              <path d="M20 20l3-1v8" fill="none" stroke="#cf6a62" strokeWidth="2" />
            </svg>
            <Label $s={38} $b={700} $c="#2c2c2c" $ml={12}>人气榜</Label>
            <Icon width="16" height="24" viewBox="0 0 16 24" stroke="#aaa" strokeWidth="3" $ml={13}><path d="M3 2L12 12L3 22" /></Icon>
          </CardHead>
          <CardText>
            <Label $s={33.5} $c={C.gray} $ls={0.8}><Lead $g={6}>A</Lead>股市场排名第</Label>
            <Label $s={35} $b={700} $c="#c9502b">9</Label>
            <Label $s={33.5} $c={C.gray} $ml={1}>名</Label>
          </CardText>
        </Card>
        <Card>
          <CardArt width="250" height="220" viewBox="0 0 250 220">
            <path d="M6 0H250V220H30z" fill="#fdf2ef" />
            <path d="M52 20H105L120 34L140 20Q215 10 250 45V220H65z" fill="#fef6f3" />
            <path d="M74 40H101L108 84L128 40H165L115 130H84z" fill="#fbebe8" />
            <path d="M236 56Q200 35 165 45Q130 60 150 85Q175 100 172 120H250Q240 90 205 84Q185 76 195 65Q210 58 222 72z" fill="#fbebe8" />
          </CardArt>
          <CardHead>
            <svg width="45" height="45" viewBox="0 0 45 45">
              <circle cx="22.500" cy="22.500" r="22.500" fill="url(#cg)" />
              <text x="21" y="33" fontFamily="Roboto, sans-serif" fontStyle="italic" fontWeight="900" fontSize="28" letterSpacing="-3" textAnchor="middle" fill="#fff">VS</text>
            </svg>
            <Label $s={38.5} $b={700} $c="#2c2c2c" $ml={12}>多空看盘</Label>
          </CardHead>
          <Vote>
            <Knob $ml={9} />
            <Label $s={33.5} $c="#c9502b" $ml={27} $mt={3}>看涨</Label>
            <Label $s={33.5} $c="#5fa866" $ml={107} $mt={3}>看跌</Label>
            <Knob $ml={19} />
          </Vote>
        </Card>
      </Cards>

      <BottomBar>
        <IndexCell>
          <UpMark />
          <Label $s={53} $c={C.green} $ls={-2} $ml={14}>3965.12</Label>
          <IndexRow>
            <Label $s={45} $c={C.gray} $mt={-9}>上证</Label>
            <Label $s={39} $c={C.green} $ml={31} $mt={-8}>0.00%</Label>
          </IndexRow>
        </IndexCell>
        {actions.map(([t, s], i) => (
          <Action key={t}>
            <Icon width="60" height="58" viewBox="0 0 60 58" stroke="#666" strokeWidth="2.600">{actionIcons[i]}</Icon>
            <Label $s={s} $c={C.gray} $mt={12}>{t}</Label>
          </Action>
        ))}
      </BottomBar>

      <SysNav>
        <Icon width="42" height="44" viewBox="0 0 42 44" stroke="#777" strokeWidth="5"><path d="M4 6H37M4 22H37M4 38H37" /></Icon>
        <Icon width="44" height="44" viewBox="0 0 44 44" stroke="#777" strokeWidth="4.500" $ml={187}><rect x="4" y="4" width="37" height="37" rx="8" /></Icon>
        <Icon width="32" height="46" viewBox="0 0 32 46" stroke="#777" strokeWidth="4.500" $ml={195}><path d="M27 4L6 20q-3 3 0 6L27 42" /></Icon>
      </SysNav>
    </Screen>
  );
}
